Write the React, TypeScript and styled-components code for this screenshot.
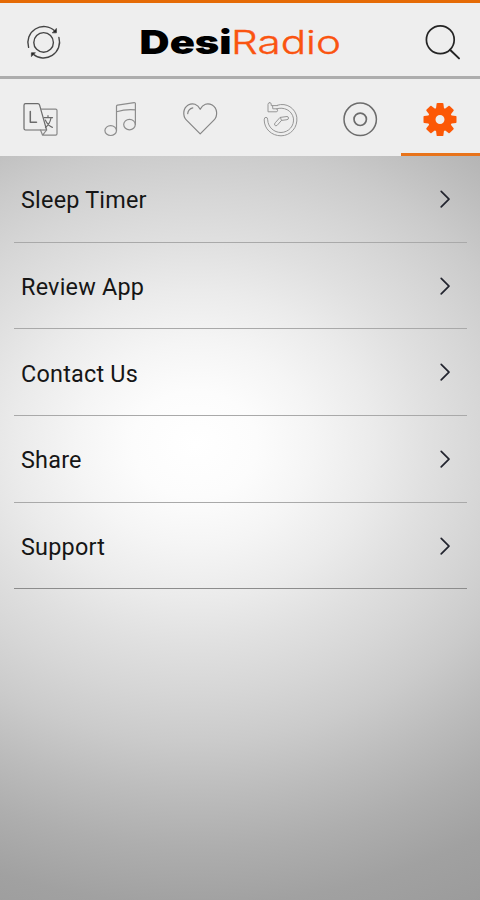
import React from "react";
import styled, { createGlobalStyle } from "styled-components";

const GlobalStyle = createGlobalStyle`
  * { box-sizing: border-box; }
  body { margin: 0; background: #9d9d9d; }
`;

const Screen = styled.div`
  width: 480px;
  height: 900px;
  display: flex;
  flex-direction: column;
  overflow: hidden;
  font-family: Roboto, "Liberation Sans", sans-serif;
`;

const Header = styled.header`
  height: 79px;
  flex: none;
  display: flex;
  align-items: center;
  justify-content: space-between;
  padding: 5px 18px 0 24px;
  background: #eeeeee;
  border-top: 3px solid #e56a05;
  border-bottom: 3px solid #adadad;
`;

const IconButton = styled.button`
  width: 40px;
  height: 40px;
  padding: 0;
  border: 0;
  background: none;
  display: flex;
  align-items: center;
  justify-content: center;
`;

const Logo = styled.svg`
  display: block;
  width: 212px;
  height: 52px;
  font-family: Inter, "Liberation Sans", sans-serif;
`;

const Tabs = styled.nav`
  height: 77px;
  flex: none;
  display: grid;
  grid-template-columns: repeat(6, 80px);
  background: #eeeeee;
`;

const Tab = styled.button<{ $active?: boolean }>`
  padding: 7px ${(p) => (p.$active ? "1px" : "0")} 0 0;
  border: 0;
  border-bottom: 3px solid ${(p) => (p.$active ? "#e8731a" : "transparent")};
  margin-left: ${(p) => (p.$active ? "1px" : "0")};
  background: none;
  display: flex;
  align-items: center;
  justify-content: center;
`;

const Glyph = styled.svg<{ $size?: number }>`
  display: block;
  width: ${(p) => p.$size ?? 40}px;
  height: ${(p) => p.$size ?? 40}px;
  fill: none;
  stroke-linecap: round;
  stroke-linejoin: round;
`;

const Content = styled.main`
  flex: 1;
  padding: 0 13px 0 14px;
  background: radial-gradient(
    ellipse 620px 530px at 195px 288px,
    #ffffff 0,
    #fcfcfc 10%,
    #f5f5f5 19%,
    #ebebeb 29%,
    #e0e0e0 38%,
    #d6d6d6 47%,
    #cbcbcb 56%,
    #bcbcbc 66%,
    #aeaeae 76%,
    #a1a1a1 87%,
    #9a9a9a 100%
  );
`;

const List = styled.ul`
  list-style: none;
  margin: 0;
  padding: 0;
`;

const Row = styled.li<{ $dark?: boolean }>`
  height: 86.7px;
  display: flex;
  align-items: center;
  justify-content: space-between;
  padding: 2px 12px 0 7px;
  border-bottom: 1.5px solid ${(p) => (p.$dark ? "#8c8c8c" : "#a9a9a9")};
  color: #161616;
  font-size: 23.4px;
  letter-spacing: 0.22px;
`;

const Label = styled.span`
  padding-top: 1px;
  white-space: nowrap;
`;

const RefreshIcon = () => (
  <Glyph viewBox="0 0 40 40" stroke="#444" strokeWidth="1.4">
    <circle cx="19.6" cy="20.4" r="9.8" />
    <path d="M4.6 25.4A16 16 0 0 1 30.8 8.9M34.9 15.4A16 16 0 0 1 9 32" />
    <path d="M32.4 6.8V10.8H28.6ZM7.4 34.2V30.8H11Z" fill="#222" strokeWidth="0.8" />
  </Glyph>
);

const SearchIcon = () => (
  <Glyph viewBox="0 0 40 40" stroke="#242424" strokeWidth="1.7">
    <circle cx="18.3" cy="17.8" r="13.9" />
    <path d="M28 27.8L37 36.4" strokeWidth="2" />
  </Glyph>
);

const LanguageIcon = () => (
  <Glyph viewBox="0 0 40 40" stroke="#6b6b6b" strokeWidth="1.2">
    <path d="M5.5 3.7H17.8Q19.2 3.7 19.6 5.1L26.6 30H5.5Q4 30 4 28.5V5.2Q4 3.7 5.5 3.7Z" />
    <path d="M21 9.2H35.6Q37 9.2 37 10.6V33.8Q37 35.2 35.6 35.2H22.6L20.5 30M22.6 35.2L26.6 30" stroke="#888" />
    <path d="M10.3 11.5V22.2H16.5" strokeWidth="1.5" />
    <path d="M24 17.7H32.5M28 15.7V17.7M31 18Q29.7 24.4 25.5 27.5M25.3 20Q28 25.8 32.4 27.4" />
  </Glyph>
);

const MusicIcon = () => (
  <Glyph viewBox="0 0 40 40" stroke="#8d8d8d" strokeWidth="1.2">
    <ellipse cx="10.7" cy="30.6" rx="5.8" ry="4.9" />
    <ellipse cx="29.5" cy="24.6" rx="5.8" ry="5.2" />
    <path d="M16.5 30.6V6.2Q16.5 5.3 17.5 5.1L34.2 2.7Q35.4 2.6 35.4 3.7V24.6M16.5 11.8Q26 8.8 35.4 9.8" />
  </Glyph>
);

const HeartIcon = () => (
  <Glyph viewBox="0 0 40 40" stroke="#858585" strokeWidth="1.2">
    <path d="M20.2 33.9L6.5 20.2C2.2 15.8 3.1 8.2 8.2 5.1C12.8 2.4 17.7 4.1 20.2 9.3C22.7 4.1 27.6 2.4 32.2 5.1C37.3 8.2 38.2 15.8 33.9 20.2Z" />
    <path d="M7.7 13.6Q8.2 8.8 12.8 7.8" />
  </Glyph>
);

const HistoryIcon = () => (
  <Glyph viewBox="0 0 40 40" stroke="#969696" strokeWidth="1">
    <path d="M17.5 5.2C26.5 2.2 35.5 8.4 36.8 17.2C38 27.5 30.5 35.8 21 35.8C11.5 35.8 4.2 28.8 4.2 19.8Q4.2 17.3 6 17.3Q7.7 17.3 7.7 19.8C8 27.2 14 32.5 21 32.5C28.8 32.3 34.5 25.8 33.4 18.1C31.8 10.3 24 6.6 16.5 8.8" />
    <path d="M9.5 2.6Q8 2.8 8 4.4V11.8H16.2Q17.6 11.8 17.6 10.3Q17.6 8.8 16.2 8.8H12.8L12.6 5.6H17.5M12.6 5.6H11.2V4Q11.2 2.5 9.5 2.6" />
    <path d="M20.4 17.4L27 16.5Q28.4 16.5 28.5 18Q28.5 19.5 27 19.7L21.5 20.4L17.1 25.4Q15.7 26.3 14.8 25.2Q14 24 15 23ZM20.4 17.4L21.5 20.4" />
  </Glyph>
);

const DiscIcon = () => (
  <Glyph viewBox="0 0 40 40" stroke="#6c6c6c" strokeWidth="1.5">
    <circle cx="20.2" cy="19.3" r="16.2" />
    <circle cx="20.2" cy="19.3" r="6.2" strokeWidth="1.7" />
  </Glyph>
);

const teeth = [0, 45, 90, 135, 180, 225, 270, 315];

const GearIcon = () => (
  <Glyph viewBox="0 0 40 40">
    <g fill="#fc5806">
      {teeth.map((angle) => (
        <path key={angle} d="M15.8 10L16.6 3.6Q16.8 3 17.6 3H22.4Q23.2 3 23.4 3.6L24.2 10Z" transform={`rotate(${angle} 20 19.5)`} />
      ))}
    </g>
    <circle cx="20" cy="19.5" r="8.3" stroke="#fc5806" strokeWidth="7.6" />
  </Glyph>
);

const ChevronIcon = () => (
  <Glyph $size={20} viewBox="0 0 20 20" stroke="#22242e" strokeWidth="1.7">
    <path d="M6.2 1.3L14 9.1L6.2 16.9" />
  </Glyph>
);

const tabs = [
  { name: "Languages", icon: <LanguageIcon /> },
  { name: "Music", icon: <MusicIcon /> },
  { name: "Favorites", icon: <HeartIcon /> },
  { name: "Recent", icon: <HistoryIcon /> },
  { name: "Albums", icon: <DiscIcon /> },
  { name: "Settings", icon: <GearIcon />, active: true },
];

const items = ["Sleep Timer", "Review App", "Contact Us", "Share", "Support"];

export default function App() {
  return (
    <Screen>
      <GlobalStyle />
      <Header>
        <IconButton aria-label="Refresh">
          <RefreshIcon />
        </IconButton>
        <Logo viewBox="0 0 212 52">
          <text x="2.6" y="38" fontSize="32.8" fontWeight="900" fill="#000" textLength="92" lengthAdjust="spacingAndGlyphs">
            Desi
          </text>
          <text x="94" y="38" fontSize="32.8" fontWeight="300" fill="#fa5410" stroke="#fa5410" strokeWidth="0.35" textLength="110" lengthAdjust="spacingAndGlyphs">
            Radio
          </text>
        </Logo>
        <IconButton aria-label="Search">
          <SearchIcon />
        </IconButton>
      </Header>
      <Tabs>
        {tabs.map((tab) => (
          <Tab key={tab.name} aria-label={tab.name} $active={tab.active}>
            {tab.icon}
          </Tab>
        ))}
      </Tabs>
      <Content>
        <List>
          {items.map((label, i) => (
            <Row key={label} $dark={i === items.length - 1}>
              <Label>{label}</Label>
              <ChevronIcon />
            </Row>
          ))}
        </List>
      </Content>
    </Screen>
  );
}
